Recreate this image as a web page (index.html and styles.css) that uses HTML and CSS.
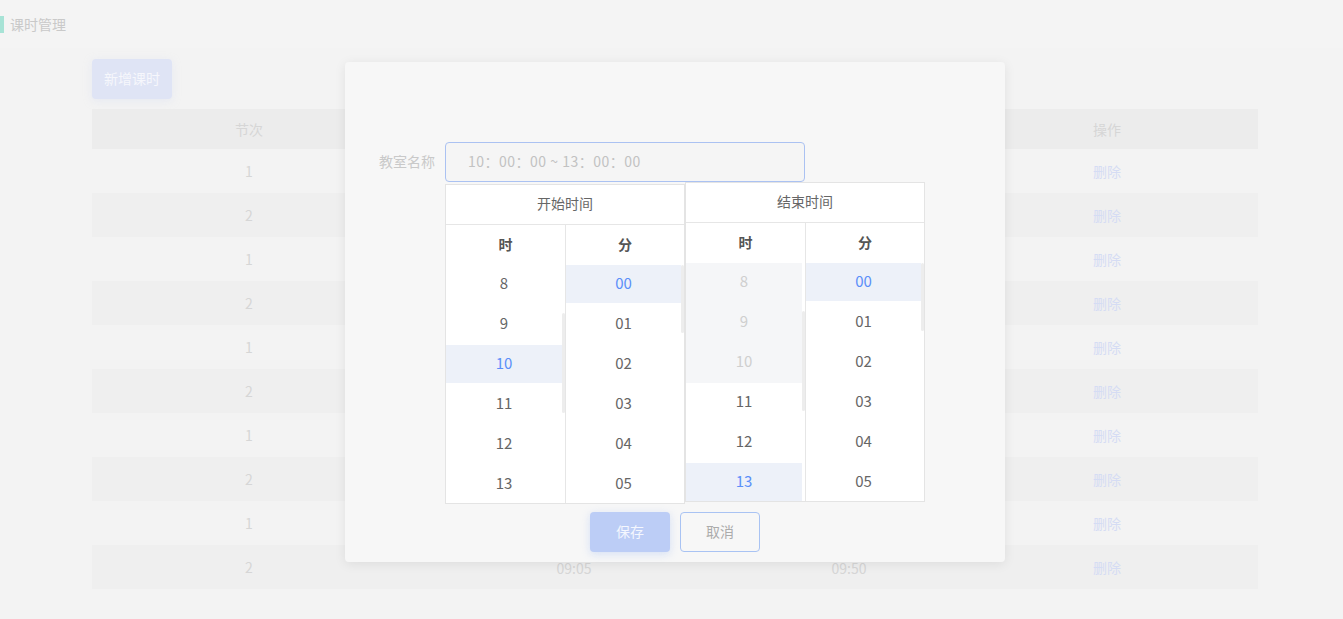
FILE: index.html
```html
<!DOCTYPE html>
<html lang="zh-CN">
<head>
<meta charset="utf-8">
<title>课时管理</title>
<link rel="stylesheet" href="styles.css">
</head>
<body>
<div class="page">
  <div class="title-bar"><span class="accent"></span><span class="title">课时管理</span></div>
  <div class="content">
    <button class="btn-add">新增课时</button>
    <table class="grid">
      <colgroup><col class="c1"><col class="c2"><col class="c3"><col class="c4"></colgroup>
      <thead><tr><th>节次</th><th></th><th></th><th>操作</th></tr></thead>
      <tbody>
        <tr><td>1</td><td></td><td></td><td class="link">删除</td></tr>
        <tr><td>2</td><td></td><td></td><td class="link">删除</td></tr>
        <tr><td>1</td><td></td><td></td><td class="link">删除</td></tr>
        <tr><td>2</td><td></td><td></td><td class="link">删除</td></tr>
        <tr><td>1</td><td></td><td></td><td class="link">删除</td></tr>
        <tr><td>2</td><td></td><td></td><td class="link">删除</td></tr>
        <tr><td>1</td><td></td><td></td><td class="link">删除</td></tr>
        <tr><td>2</td><td></td><td></td><td class="link">删除</td></tr>
        <tr><td>1</td><td></td><td></td><td class="link">删除</td></tr>
        <tr><td>2</td><td class="time">09:05</td><td class="time">09:50</td><td class="link">删除</td></tr>
      </tbody>
    </table>
  </div>
</div>

<div class="modal">
  <div class="form-row">
    <label class="form-label">教室名称</label>
    <div class="input">10：00：00 ~ 13：00：00</div>
  </div>
  <div class="picker">
    <div class="panel panel-start">
      <div class="panel-title">开始时间</div>
      <div class="panel-cols">
        <div class="col">
          <div class="col-head">时</div>
          <div class="list">
            <div class="item">8</div>
            <div class="item">9</div>
            <div class="item selected">10</div>
            <div class="item">11</div>
            <div class="item">12</div>
            <div class="item">13</div>
            <span class="thumb thumb-hour"></span>
          </div>
        </div>
        <div class="col">
          <div class="col-head">分</div>
          <div class="list">
            <div class="item selected">00</div>
            <div class="item">01</div>
            <div class="item">02</div>
            <div class="item">03</div>
            <div class="item">04</div>
            <div class="item">05</div>
            <span class="thumb thumb-min"></span>
          </div>
        </div>
      </div>
    </div>
    <div class="panel panel-end">
      <div class="panel-title">结束时间</div>
      <div class="panel-cols">
        <div class="col">
          <div class="col-head">时</div>
          <div class="list">
            <div class="item disabled">8</div>
            <div class="item disabled">9</div>
            <div class="item disabled">10</div>
            <div class="item">11</div>
            <div class="item">12</div>
            <div class="item selected">13</div>
            <span class="thumb thumb-hour"></span>
          </div>
        </div>
        <div class="col">
          <div class="col-head">分</div>
          <div class="list">
            <div class="item selected">00</div>
            <div class="item">01</div>
            <div class="item">02</div>
            <div class="item">03</div>
            <div class="item">04</div>
            <div class="item">05</div>
            <span class="thumb thumb-min"></span>
          </div>
        </div>
      </div>
    </div>
  </div>
  <div class="actions">
    <button class="btn btn-primary">保存</button>
    <button class="btn btn-default">取消</button>
  </div>
</div>
</body>
</html>
```
FILE: styles.css
```css
* { box-sizing: border-box; }

html, body {
  margin: 0;
  padding: 0;
  background: #f3f3f3;
  font-family: "Noto Sans CJK SC", "Noto Sans", sans-serif;
  font-size: 14px;
  line-height: 1;
}

.page {
  width: 1343px;
  height: 619px;
  overflow: hidden;
}

.title-bar {
  height: 48px;
  display: flex;
  align-items: center;
  background: #f4f4f4;
}

.accent {
  width: 4px;
  height: 17px;
  background: #a7e3d6;
}

.title {
  margin-left: 6px;
  color: #c9c9c9;
  font-size: 14px;
}

.content {
  padding: 11px 85px 0 92px;
}

.btn-add {
  display: block;
  width: 80px;
  height: 40px;
  border: none;
  border-radius: 4px;
  background: #dfe4f5;
  color: #f6f7fc;
  font-family: inherit;
  font-size: 14px;
  box-shadow: 0 2px 8px rgba(205, 214, 240, 0.35);
  padding: 0 0 2px;
}

.grid {
  margin-top: 10px;
  width: 1166px;
  border-collapse: collapse;
  table-layout: fixed;
}

.grid .c1 { width: 314px; }
.grid .c2 { width: 336px; }
.grid .c3 { width: 214px; }
.grid .c4 { width: 302px; }

.grid th {
  height: 40px;
  background: #ececec;
  color: #d6d6d6;
  font-weight: normal;
  font-size: 14px;
  text-align: center;
  padding: 0;
}

.grid td {
  height: 44px;
  color: #d6d6d6;
  text-align: center;
  padding: 0;
}

.grid tbody tr:nth-child(even) td { background: #efefef; }

.grid td.link { color: #d5dcf4; }

.grid td.time { padding-top: 2px; }

/* modal */
.modal {
  position: absolute;
  left: 345px;
  top: 62px;
  width: 660px;
  height: 500px;
  background: #f7f7f7;
  border-radius: 4px;
  box-shadow: 0 2px 12px rgba(0, 0, 0, 0.08);
  padding-top: 80px;
}

.form-row {
  display: flex;
  align-items: center;
}

.form-label {
  width: 100px;
  padding-right: 10px;
  padding-bottom: 2px;
  text-align: right;
  color: #c9c9c9;
  font-size: 14px;
}

.input {
  width: 360px;
  height: 40px;
  border: 1px solid #abc2f2;
  border-radius: 4px;
  background: #f5f5f5;
  color: #c2c2c2;
  font-size: 14px;
  letter-spacing: 0.5px;
  display: flex;
  align-items: center;
  padding: 0 0 2px 22px;
}

.picker {
  display: flex;
  align-items: flex-start;
  margin-left: 100px;
}

.panel {
  width: 240px;
  background: #fff;
  border: 1px solid #e4e4e4;
}

.panel-start { margin-top: 2px; }

.panel-title {
  height: 40px;
  border-bottom: 1px solid #e6e6e6;
  display: flex;
  align-items: center;
  justify-content: center;
  color: #666;
  font-size: 14px;
  padding-bottom: 4px;
}

.panel-cols {
  display: flex;
}

.col {
  width: 119px;
}

.col + .col {
  border-left: 1px solid #e6e6e6;
}

.col-head {
  height: 40px;
  display: flex;
  align-items: center;
  justify-content: center;
  color: #555;
  font-weight: bold;
  font-size: 14px;
  padding-bottom: 3px;
}

.list {
  position: relative;
  height: 238px;
  overflow: hidden;
  padding-right: 3px;
}

.item {
  height: 38px;
  margin-bottom: 2px;
  display: flex;
  align-items: center;
  justify-content: center;
  color: #666;
  font-size: 15px;
  padding-bottom: 4px;
}

.item.selected {
  background: #edf1f9;
  color: #5b8ff9;
}

.item.disabled {
  height: 40px;
  margin-bottom: 0;
  background: #f5f6f8;
  color: #cfcfcf;
  padding-bottom: 6px;
}

.thumb {
  position: absolute;
  right: 0;
  width: 3px;
  background: #ededed;
  border-radius: 2px;
}

.thumb-hour { top: 48px; height: 100px; }
.thumb-min { top: 0; height: 68px; }

.actions {
  display: flex;
  justify-content: center;
  gap: 10px;
  margin-top: 8px;
}

.btn {
  width: 80px;
  height: 40px;
  border-radius: 4px;
  font-family: inherit;
  font-size: 14px;
  padding: 0 0 2px;
}

.btn-primary {
  border: none;
  background: #bccdf6;
  color: #f4f7fe;
  box-shadow: 0 2px 8px rgba(170, 195, 245, 0.45);
}

.btn-default {
  border: 1px solid #a9c3f3;
  background: transparent;
  color: #ababab;
}
```
